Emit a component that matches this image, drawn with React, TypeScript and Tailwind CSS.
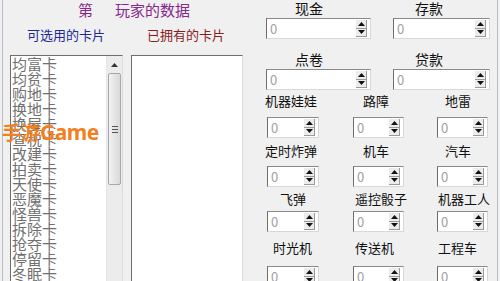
import React from "react";

const FONT = { fontFamily: '"Noto Sans CJK SC", "Noto Sans", sans-serif' };

function Spin({ w }: { w: string }) {
  return (
    <div
      className={`flex items-stretch h-[21px] ${w} bg-white border border-t-[#8a8a8a] border-l-[#6e6e6e] border-r-[#d8d8d8] border-b-[#d8d8d8]`}
    >
      <span className="flex-1 pl-[3px] text-[13px] leading-[19px] text-[#a0a0a0]">0</span>
      <div className="flex flex-col w-[11px] my-[1px] mr-[3px]">
        <div className="flex-1 flex items-center justify-center bg-[#ececec] border-r border-b border-[#9a9a9a]">
          <svg width="7" height="4" viewBox="0 0 7 4">
            <polygon points="0,4 7,4 3.5,0" fill="#111" />
          </svg>
        </div>
        <div className="flex-1 flex items-center justify-center bg-[#ececec] border-r border-b border-[#9a9a9a]">
          <svg width="7" height="4" viewBox="0 0 7 4">
            <polygon points="0,0 7,0 3.5,4" fill="#111" />
          </svg>
        </div>
      </div>
    </div>
  );
}

const cards = [
  "均富卡",
  "均贫卡",
  "购地卡",
  "换地卡",
  "换屋卡",
  "查税卡",
  "改建卡",
  "拍卖卡",
  "天使卡",
  "恶魔卡",
  "怪兽卡",
  "拆除卡",
  "抢夺卡",
  "停留卡",
  "冬眠卡",
  "请神卡",
];

export default function App() {
  return (
    <div className="w-[500px] h-[281px] bg-[#f0f0f0] px-[2px] overflow-hidden" style={FONT}>
      <div className="relative h-full flex border-l border-r border-[#b8c0cc]">
        {/* Left section */}
        <div className="w-[259px] flex flex-col shrink-0">
          <div className="mt-[2px] h-[16px] flex pl-[75px] gap-[22px] text-[15px] leading-[16px] text-[#86288a]">
            <span>第</span>
            <span>玩家的数据</span>
          </div>
          <div className="mt-[9px] h-[15px] flex pl-[24px] gap-[42px] text-[13px] leading-[15px]">
            <span className="text-[#1e2a96]">可选用的卡片</span>
            <span className="text-[#8a1c1c]">已拥有的卡片</span>
          </div>
          <div className="mt-[13px] flex pl-[7px] gap-[8px]">
            <div className="w-[113px] h-[240px] flex bg-white border border-t-[#6e6e6e] border-l-[#6e6e6e] border-r-[#dcdcdc] border-b-[#dcdcdc]">
              <div className="flex-1 flex flex-col pl-[1px] text-[15px] leading-[15px] text-[#707070] overflow-hidden">
                {cards.map((c) => (
                  <div key={c} className="h-[15px] whitespace-nowrap">
                    {c}
                  </div>
                ))}
              </div>
              <div className="w-[16px] flex flex-col bg-[#ececec] border-l border-[#e6e6e6]">
                <div className="h-[17px] flex items-center justify-center">
                  <svg width="7" height="4" viewBox="0 0 7 4">
                    <polygon points="0,4 7,4 3.5,0" fill="#333" />
                  </svg>
                </div>
                <div className="h-[112px] mx-[1px] rounded-[2px] border border-[#a8a8a8] bg-gradient-to-r from-[#f2f2f2] to-[#d9d9d9] flex items-center justify-center">
                  <div className="flex flex-col gap-[2px]">
                    <div className="w-[6px] h-[1px] bg-[#555]" />
                    <div className="w-[6px] h-[1px] bg-[#555]" />
                    <div className="w-[6px] h-[1px] bg-[#555]" />
                  </div>
                </div>
              </div>
            </div>
            <div className="w-[112px] h-[240px] bg-white border border-t-[#6e6e6e] border-l-[#6e6e6e] border-r-[#dcdcdc] border-b-[#dcdcdc]" />
          </div>
        </div>

        {/* Right section */}
        <div className="flex-1 flex flex-col text-[#111]">
          <div className="mt-[1px] h-[15px] flex text-[14px] leading-[15px]">
            <span className="ml-[33px]">现金</span>
            <span className="ml-[92px]">存款</span>
          </div>
          <div className="mt-[2px] flex">
            <div className="ml-[4px] h-[22px]">
              <Spin w="w-[105px]" />
            </div>
            <div className="ml-[22px]">
              <Spin w="w-[97px]" />
            </div>
          </div>
          <div className="mt-[12px] h-[15px] flex text-[14px] leading-[15px]">
            <span className="ml-[33px]">点卷</span>
            <span className="ml-[92px]">贷款</span>
          </div>
          <div className="mt-[2px] flex">
            <div className="ml-[4px]">
              <Spin w="w-[105px]" />
            </div>
            <div className="ml-[22px]">
              <Spin w="w-[97px]" />
            </div>
          </div>

          {/* Row 3 */}
          <div className="mt-[3px] h-[15px] flex text-[13px] leading-[15px]">
            <div className="w-[86px] pl-[3px]">机器娃娃</div>
            <div className="w-[84px] pl-[15px]">路障</div>
            <div className="w-[66px] pl-[13px]">地雷</div>
          </div>
          <div className="mt-[9px] flex">
            <div className="w-[86px] pl-[5px]"><Spin w="w-[52px]" /></div>
            <div className="w-[84px] pl-[5px]"><Spin w="w-[51px]" /></div>
            <div className="w-[66px] pl-[5px]"><Spin w="w-[51px]" /></div>
          </div>

          {/* Row 4 */}
          <div className="mt-[5px] h-[15px] flex text-[13px] leading-[15px]">
            <div className="w-[86px] pl-[3px]">定时炸弹</div>
            <div className="w-[84px] pl-[15px]">机车</div>
            <div className="w-[66px] pl-[13px]">汽车</div>
          </div>
          <div className="mt-[8px] flex">
            <div className="w-[86px] pl-[5px]"><Spin w="w-[52px]" /></div>
            <div className="w-[84px] pl-[5px]"><Spin w="w-[51px]" /></div>
            <div className="w-[66px] pl-[5px]"><Spin w="w-[51px]" /></div>
          </div>

          {/* Row 5 */}
          <div className="mt-[4px] h-[15px] flex text-[13px] leading-[15px]">
            <div className="w-[86px] pl-[18px]">飞弹</div>
            <div className="w-[84px] pl-[7px]">遥控骰子</div>
            <div className="w-[66px] pl-[6px] whitespace-nowrap">机器工人</div>
          </div>
          <div className="mt-[5px] flex">
            <div className="w-[86px] pl-[5px]"><Spin w="w-[52px]" /></div>
            <div className="w-[84px] pl-[5px]"><Spin w="w-[51px]" /></div>
            <div className="w-[66px] pl-[5px]"><Spin w="w-[51px]" /></div>
          </div>

          {/* Row 6 */}
          <div className="mt-[8px] h-[15px] flex text-[13px] leading-[15px]">
            <div className="w-[86px] pl-[11px]">时光机</div>
            <div className="w-[84px] pl-[7px]">传送机</div>
            <div className="w-[66px] pl-[6px]">工程车</div>
          </div>
          <div className="mt-[11px] flex">
            <div className="w-[86px] pl-[5px]"><Spin w="w-[52px]" /></div>
            <div className="w-[84px] pl-[5px]"><Spin w="w-[51px]" /></div>
            <div className="w-[66px] pl-[5px]"><Spin w="w-[51px]" /></div>
          </div>
        </div>

        {/* watermark overlay */}
        <div
          className="absolute left-[-1px] top-[120px] flex items-baseline font-bold text-[#f2801e] whitespace-nowrap leading-[24px]"
          style={{ fontFamily: '"Noto Sans", "Noto Sans CJK SC", sans-serif' }}
        >
          <span className="text-[19px]" style={FONT}>手游</span>
          <span className="text-[21px] tracking-[-0.5px]">Game</span>
        </div>
      </div>
    </div>
  );
}
